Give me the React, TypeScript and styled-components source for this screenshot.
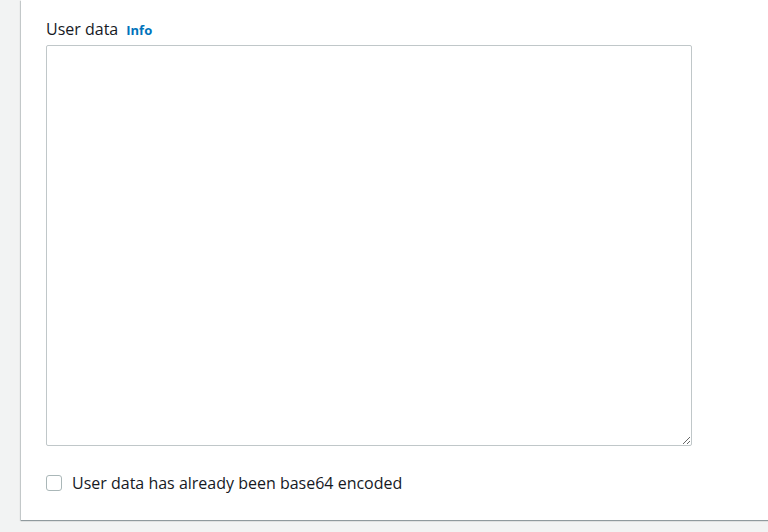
import React from 'react';
import styled, { createGlobalStyle } from 'styled-components';

const GlobalStyle = createGlobalStyle`
  html, body {
    margin: 0;
    padding: 0;
    background: #f2f3f3;
    overflow: hidden;
  }
  body {
    font-family: "Open Sans", "Noto Sans", sans-serif;
    color: #16191f;
  }
`;

const Page = styled.div`
  height: 532px;
  padding-left: 21px;
`;

const Panel = styled.div`
  width: 780px;
  height: 520px;
  box-sizing: border-box;
  background: #ffffff;
  padding: 17px 0 0 25px;
  box-shadow: 0 1px 1px 0 rgba(0, 28, 36, 0.3), -1px 1px 1px 0 rgba(0, 28, 36, 0.15);
  display: flex;
  flex-direction: column;
`;

const LabelRow = styled.div`
  display: flex;
  align-items: baseline;
  gap: 8px;
  height: 24px;
  margin-bottom: 4px;
`;

const Label = styled.label`
  font-size: 16px;
  font-weight: 500;
  line-height: 24px;
  color: #16191f;
`;

const InfoLink = styled.a`
  font-size: 13px;
  font-weight: 700;
  color: #0073bb;
  text-decoration: none;
  cursor: pointer;
`;

const TextArea = styled.textarea`
  width: 646px;
  height: 401px;
  box-sizing: border-box;
  border: 1px solid #c0c7c9;
  border-radius: 2px;
  padding: 4px 8px;
  font-family: inherit;
  font-size: 14px;
  resize: vertical;
  outline: none;
  margin: 0;
`;

const CheckRow = styled.label`
  display: flex;
  align-items: center;
  gap: 10px;
  margin-top: 27px;
  cursor: pointer;
`;

const Box = styled.span`
  width: 16px;
  height: 16px;
  box-sizing: border-box;
  border: 1px solid #aab7b8;
  border-radius: 3px;
  background: #ffffff;
  flex-shrink: 0;
`;

const CheckText = styled.span`
  font-size: 16px;
  line-height: 20px;
  color: #16191f;
`;

export default function App() {
  return (
    <>
      <GlobalStyle />
      <Page>
        <Panel>
          <LabelRow>
            <Label>User data</Label>
            <InfoLink>Info</InfoLink>
          </LabelRow>
          <TextArea />
          <CheckRow>
            <Box />
            <CheckText>User data has already been base64 encoded</CheckText>
          </CheckRow>
        </Panel>
      </Page>
    </>
  );
}
